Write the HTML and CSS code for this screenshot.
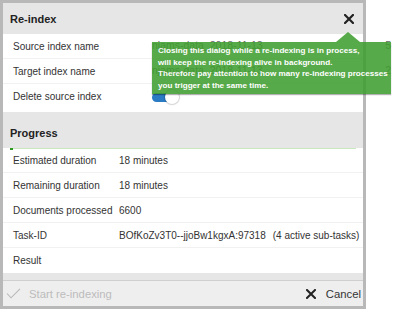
FILE: index.html
```html
<!DOCTYPE html>
<html>
<head>
<meta charset="utf-8">
<link rel="stylesheet" href="styles.css">
</head>
<body>
<div class="dialog">
  <div class="hdr">
    <span class="title">Re-index</span>
    <svg class="close" width="10" height="10" viewBox="0 0 10 10"><path d="M1 1L9 9M9 1L1 9" stroke="#222" stroke-width="2.2" stroke-linecap="square"/></svg>
  </div>
  <div class="card idx">
    <div class="irow"><span class="lbl">Source index name</span><span class="val"><span>njams-data_2018-11-13</span><span class="cnt">5</span></span></div>
    <div class="irow"><span class="lbl">Target index name</span><span class="val"><span>njams-data_2018-11-13</span><span class="cnt">2</span></span></div>
    <div class="irow last"><span class="lbl">Delete source index</span><span class="val"><span class="toggle"><span class="knob"></span></span></span></div>
  </div>
  <div class="sechdr">Progress</div>
  <div class="card prog">
    <div class="pbar"><div class="pfill"></div></div>
    <div class="prow"><span class="lbl">Estimated duration</span><span>18 minutes</span></div>
    <div class="prow"><span class="lbl">Remaining duration</span><span>18 minutes</span></div>
    <div class="prow"><span class="lbl">Documents processed</span><span>6600</span></div>
    <div class="prow"><span class="lbl">Task-ID</span><span>BOfKoZv3T0--jjoBw1kgxA:97318<span class="sub">(4 active sub-tasks)</span></span></div>
    <div class="prow last"><span class="lbl">Result</span><span></span></div>
  </div>
  <div class="footer">
    <span class="start"><svg width="15" height="11" viewBox="0 0 15 11"><path d="M1 5.5L5 9.8L14 0.8" fill="none" stroke="#b8b8b8" stroke-width="1.1"/></svg>Start re-indexing</span>
    <span class="cancel"><svg width="10" height="10" viewBox="0 0 10 10"><path d="M1 1L9 9M9 1L1 9" stroke="#222" stroke-width="2" stroke-linecap="square"/></svg>Cancel</span>
  </div>
  <div class="tooltip">Closing this dialog while a re-indexing is in process,<br>will keep the re-indexing alive in background.<br>Therefore pay attention to how many re-indexing processes<br>you trigger at the same time.</div>
</div>
</body>
</html>
```

FILE: styles.css
```css
html, body {
  margin: 0;
  padding: 0;
}
body {
  width: 393px;
  height: 312px;
  overflow: hidden;
  background: #fff;
  font-family: "Liberation Sans", Arial, sans-serif;
  color: #333;
  font-size: 10px;
}
.dialog {
  position: relative;
  width: 366px;
  height: 309px;
  box-sizing: border-box;
  border: 3px solid #b8b8b8;
  background: #e6e6e6;
  display: flex;
  flex-direction: column;
}
.hdr {
  height: 31px;
  flex: none;
  display: flex;
  align-items: center;
  justify-content: space-between;
  padding: 0 9px 0 7px;
}
.title {
  font-weight: bold;
  font-size: 11px;
  color: #222;
}
.close {
  display: block;
}
.card {
  background: #fff;
  flex: none;
}
.idx {
  padding-bottom: 3px;
}
.irow {
  display: grid;
  grid-template-columns: 139px 1fr;
  align-items: center;
  height: 25px;
  box-sizing: border-box;
  padding-left: 10px;
  border-bottom: 1px solid #f1f1f1;
}
.irow.last, .prow.last {
  border-bottom: none;
}
.val {
  display: flex;
  justify-content: space-between;
  align-items: center;
  margin-right: -28px;
  margin-top: -2px;
  color: #666;
  font-size: 10.5px;
}
.toggle {
  position: relative;
  display: block;
  width: 22px;
  height: 9px;
  margin-top: 4px;
  border-radius: 5px;
  background: #2b7ac4;
}
.knob {
  position: absolute;
  right: -5px;
  top: -3px;
  width: 14px;
  height: 14px;
  border-radius: 50%;
  background: #fff;
  box-shadow: 0 0 1px 1px rgba(0,0,0,0.18);
}
.sechdr {
  margin-top: 3px;
  height: 33px;
  flex: none;
  box-sizing: border-box;
  padding: 3px 0 0 7px;
  display: flex;
  align-items: center;
  font-weight: bold;
  font-size: 11px;
  color: #222;
}
.pbar {
  position: relative;
  height: 1px;
  margin: 0 7px -1px 7px;
  background: #c9e8c0;
}
.pfill {
  width: 3px;
  height: 2px;
  background: #2f9a22;
}
.prow {
  display: grid;
  grid-template-columns: 106px 1fr;
  align-items: center;
  height: 25px;
  box-sizing: border-box;
  padding-left: 10px;
  border-bottom: 1px solid #f1f1f1;
}
.sub {
  margin-left: 7px;
}
.footer {
  margin-top: 7px;
  border-top: 1px solid #cfcfcf;
  background: #eeeeee;
  height: 26px;
  flex: none;
  box-sizing: border-box;
  display: flex;
  align-items: center;
  justify-content: space-between;
  padding: 0 2px 0 3px;
  font-size: 11.3px;
}
.start {
  display: flex;
  align-items: center;
  gap: 8px;
  color: #bcbcbc;
}
.cancel {
  display: flex;
  align-items: center;
  gap: 10px;
  color: #333;
}
.tooltip {
  position: absolute;
  left: 149px;
  top: 39px;
  width: 239px;
  box-sizing: border-box;
  padding: 3px 6px 2px 6px;
  background: #3f9e2f;
  opacity: 0.87;
  color: #fff;
  font-weight: bold;
  font-size: 8.1px;
  line-height: 11.7px;
  white-space: nowrap;
  box-shadow: 0 1px 1px rgba(0,0,0,0.35);
}
.tooltip::before {
  content: "";
  position: absolute;
  left: 184px;
  top: -10px;
  border-left: 12px solid transparent;
  border-right: 12px solid transparent;
  border-bottom: 10px solid #3f9e2f;
}
```
